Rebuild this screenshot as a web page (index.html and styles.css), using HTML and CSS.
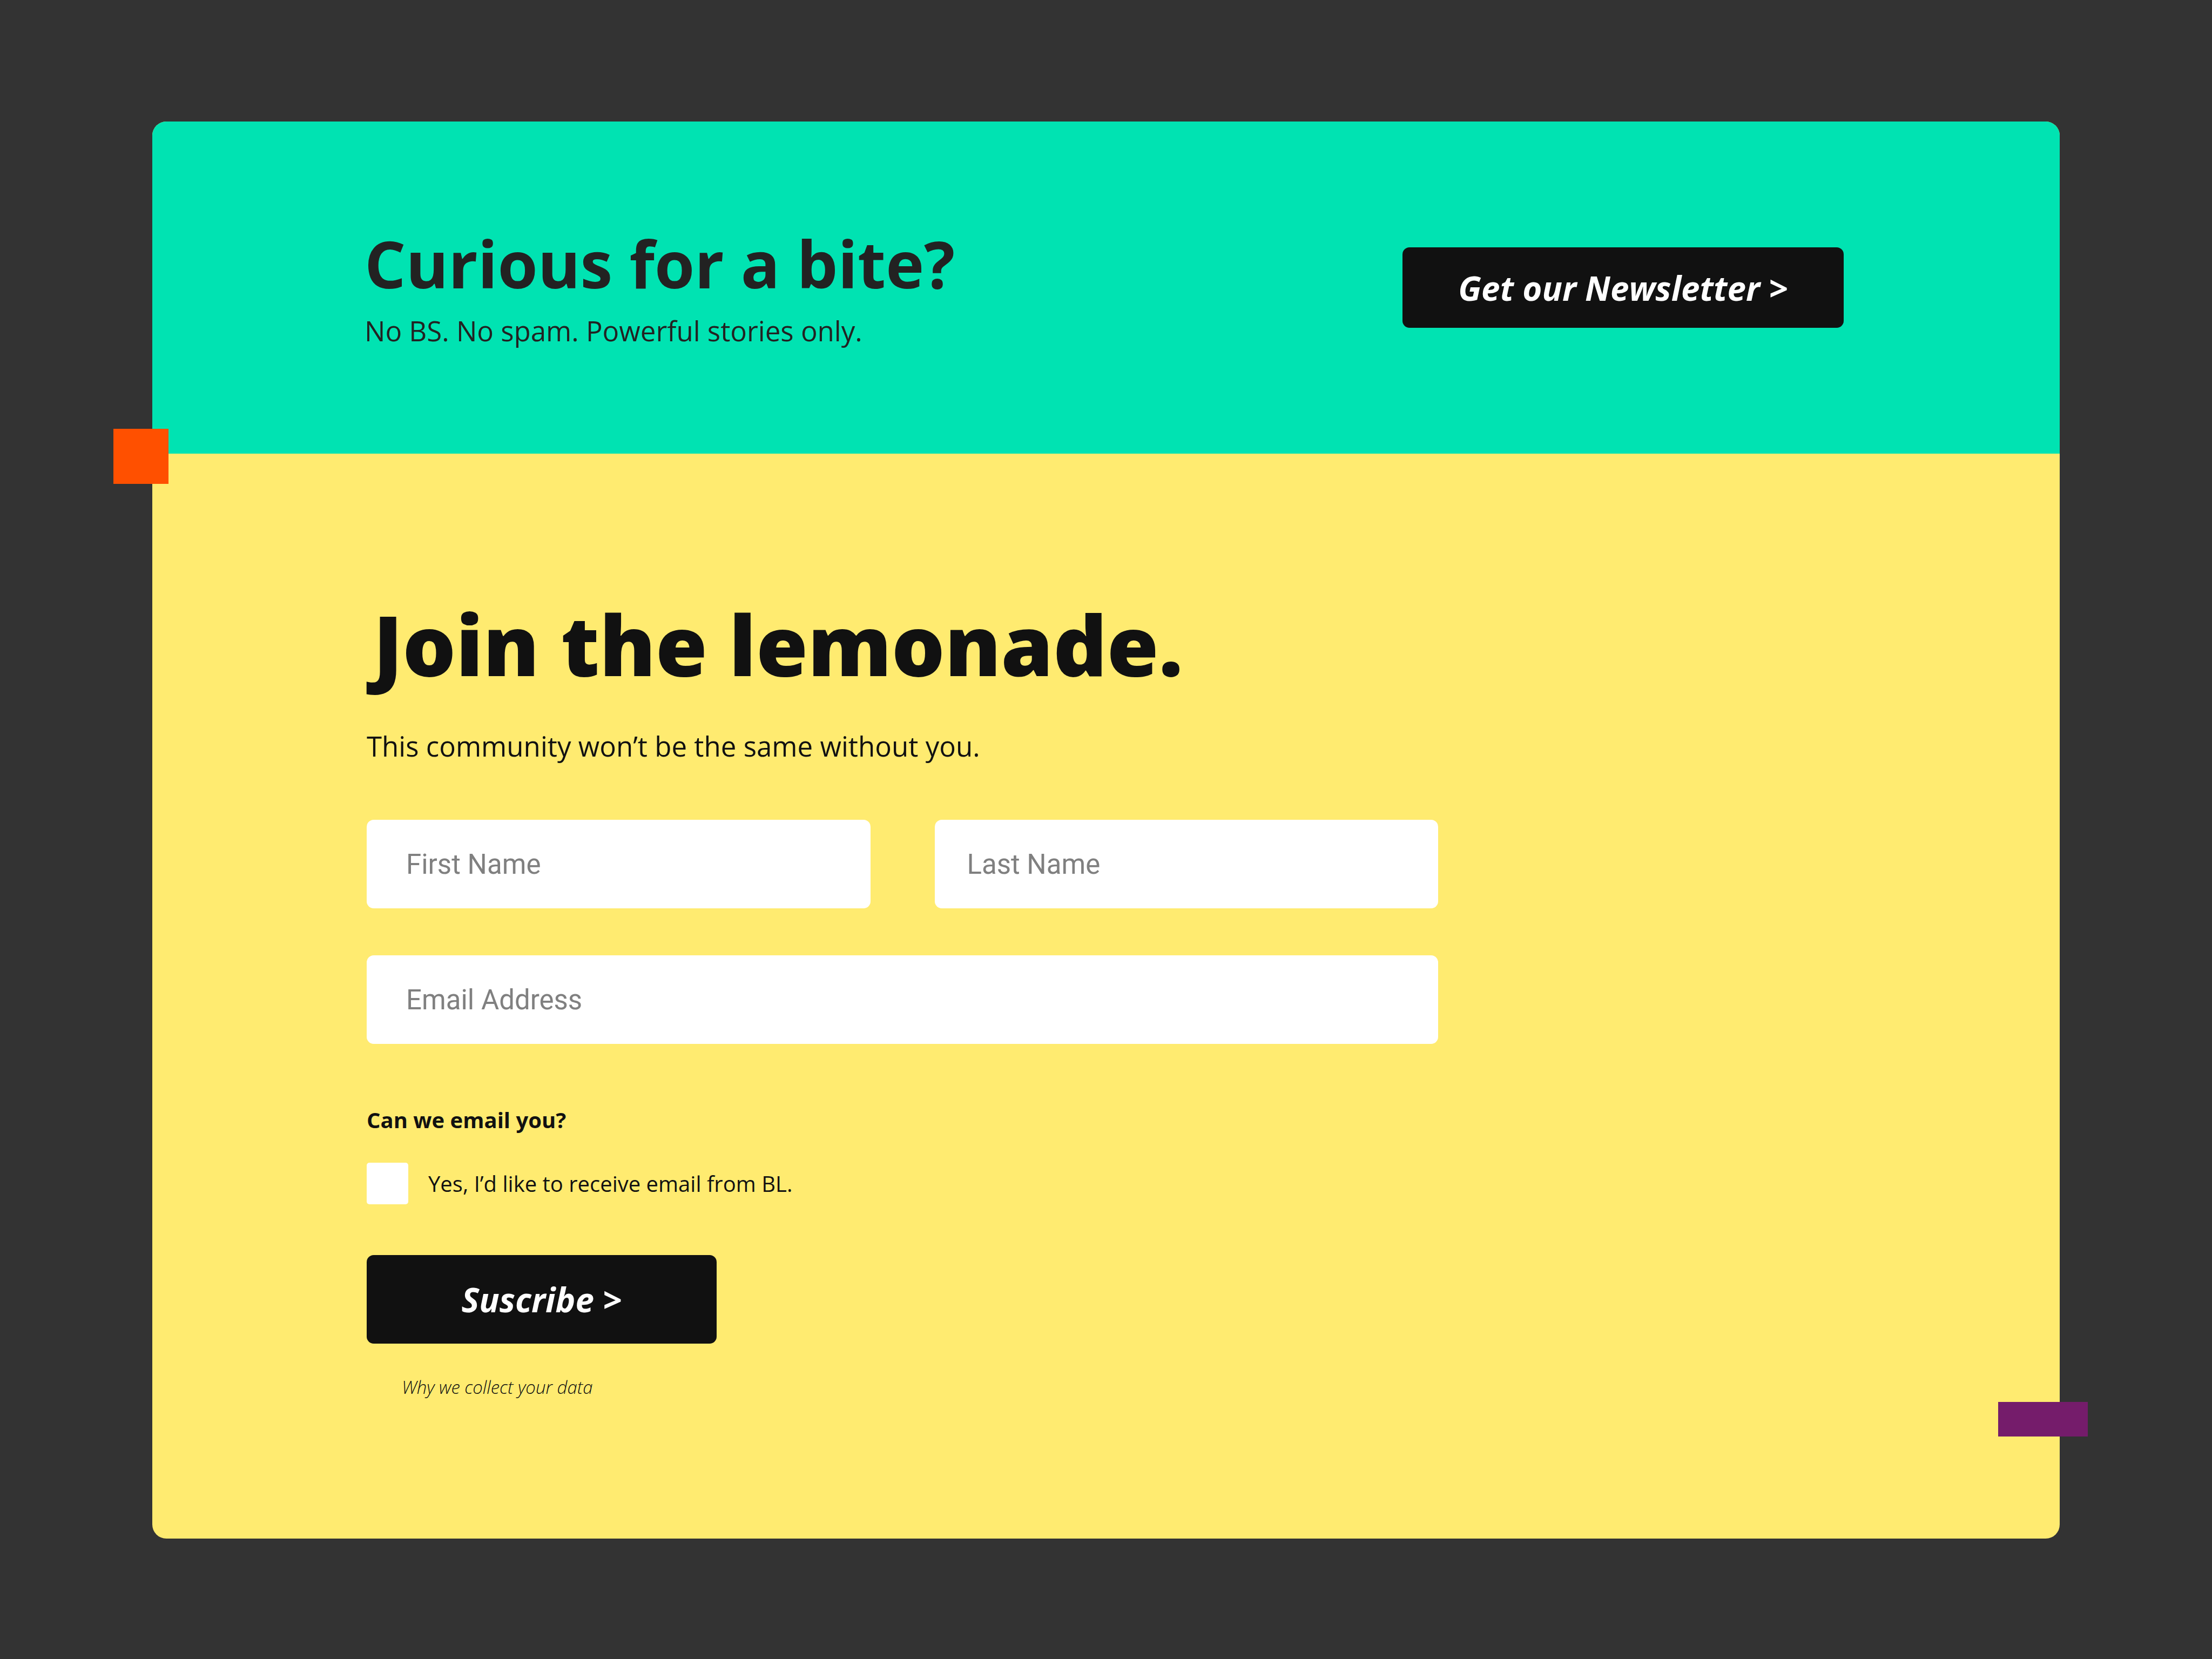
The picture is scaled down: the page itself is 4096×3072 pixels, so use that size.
FILE: index.html
```html
<!DOCTYPE html>
<html lang="en">
<head>
  <meta charset="utf-8">
  <meta name="viewport" content="width=device-width, initial-scale=1">
  <title>Join the lemonade</title>
  <link rel="stylesheet" href="styles.css">
</head>
<body>
  <main class="card">
    <header class="banner">
      <div class="banner-text">
        <h2 class="banner-title">Curious for a bite?</h2>
        <p class="banner-note">No BS. No spam. Powerful stories only.</p>
      </div>
      <button class="button button-wide" type="button">Get our Newsletter &gt;</button>
    </header>

    <section class="signup">
      <h1 class="signup-title">Join the lemonade.</h1>
      <p class="signup-lead">This community won’t be the same without you.</p>

      <form class="form">
        <div class="fields">
          <input class="field" type="text" placeholder="First Name" aria-label="First Name">
          <input class="field field-last" type="text" placeholder="Last Name" aria-label="Last Name">
          <input class="field field-full" type="email" placeholder="Email Address" aria-label="Email Address">
        </div>

        <fieldset class="consent">
          <legend class="consent-title">Can we email you?</legend>
          <div class="consent-row">
            <input class="checkbox" type="checkbox" id="consent">
            <label for="consent">Yes, I’d like to receive email from BL.</label>
          </div>
        </fieldset>

        <button class="button button-submit" type="submit">Suscribe &gt;</button>
      </form>

      <a class="privacy" href="#privacy">Why we collect your data</a>
    </section>

    <span class="accent accent-square"></span>
    <span class="accent accent-bar"></span>
  </main>
</body>
</html>
```
FILE: styles.css
```css
* {
  box-sizing: border-box;
}

body {
  margin: 0;
  min-height: 100vh;
  padding: 225px 282px;
  background: #333333;
  color: #111111;
  font-family: "Open Sans", "Noto Sans", sans-serif;
}

h1,
h2,
p {
  margin: 0;
}

.card {
  position: relative;
  border-radius: 26px;
  background: #ffeb70;
}

/* Top banner */

.banner {
  display: flex;
  align-items: center;
  justify-content: space-between;
  gap: 64px;
  padding: 193px 400px 193px 393px;
  border-radius: 26px 26px 0 0;
  background: #00e3b2;
  color: #222222;
}

.banner-text {
  display: flex;
  flex-direction: column;
  gap: 19px;
}

.banner-title {
  font-size: 120px;
  line-height: 140px;
  font-weight: 700;
}

.banner-note {
  font-size: 51px;
  line-height: 70px;
}

.button {
  padding: 0;
  border: 0;
  border-radius: 13px;
  background: #111111;
  color: #ffffff;
  font-family: inherit;
  font-size: 62px;
  font-style: italic;
  font-weight: 700;
  cursor: pointer;
}

.button-wide {
  width: 817px;
  height: 149px;
}

.button-submit {
  width: 648px;
  height: 164px;
}

/* Sign-up section */

.signup {
  display: flex;
  flex-direction: column;
  align-items: flex-start;
  padding: 262px 397px 257px;
}

.signup-title {
  padding-left: 12px;
  font-size: 155px;
  line-height: 180px;
  font-weight: 800;
}

.signup-lead {
  margin-top: 64px;
  font-size: 51px;
  line-height: 70px;
}

.form {
  width: 100%;
  max-width: 1984px;
  margin-top: 102px;
}

.fields {
  display: grid;
  grid-template-columns: 1fr 1fr;
  gap: 87px 119px;
}

.field {
  width: 100%;
  height: 164px;
  padding: 0 73px;
  border: 0;
  border-radius: 13px;
  background: #ffffff;
  color: #111111;
  font-family: Roboto, sans-serif;
  font-size: 51px;
}

.field::placeholder {
  color: #808080;
  opacity: 1;
}

.field-last {
  padding: 0 60px;
}

.field-full {
  grid-column: 1 / -1;
}

.consent {
  margin: 113px 0 94px;
  padding: 0;
  border: 0;
  font-size: 40px;
  line-height: 56px;
}

.consent-title {
  padding: 0;
  font-weight: 700;
}

.consent-row {
  display: flex;
  align-items: center;
  gap: 37px;
  padding-top: 51px;
}

.checkbox {
  appearance: none;
  width: 77px;
  height: 77px;
  margin: 0;
  border-radius: 5px;
  background: #ffffff;
}

.checkbox:checked {
  background: #111111;
}

.privacy {
  margin: 58px 0 0 65px;
  color: inherit;
  font-size: 33px;
  line-height: 46px;
  font-style: italic;
  font-weight: 300;
  text-decoration: none;
}

/* Coloured blocks straddling the card's edges */

.accent {
  position: absolute;
}

.accent-square {
  top: 569px;
  left: -72px;
  width: 102px;
  height: 102px;
  background: #ff5000;
}

.accent-bar {
  right: -52px;
  bottom: 189px;
  width: 166px;
  height: 64px;
  background: #751c6b;
}
```
